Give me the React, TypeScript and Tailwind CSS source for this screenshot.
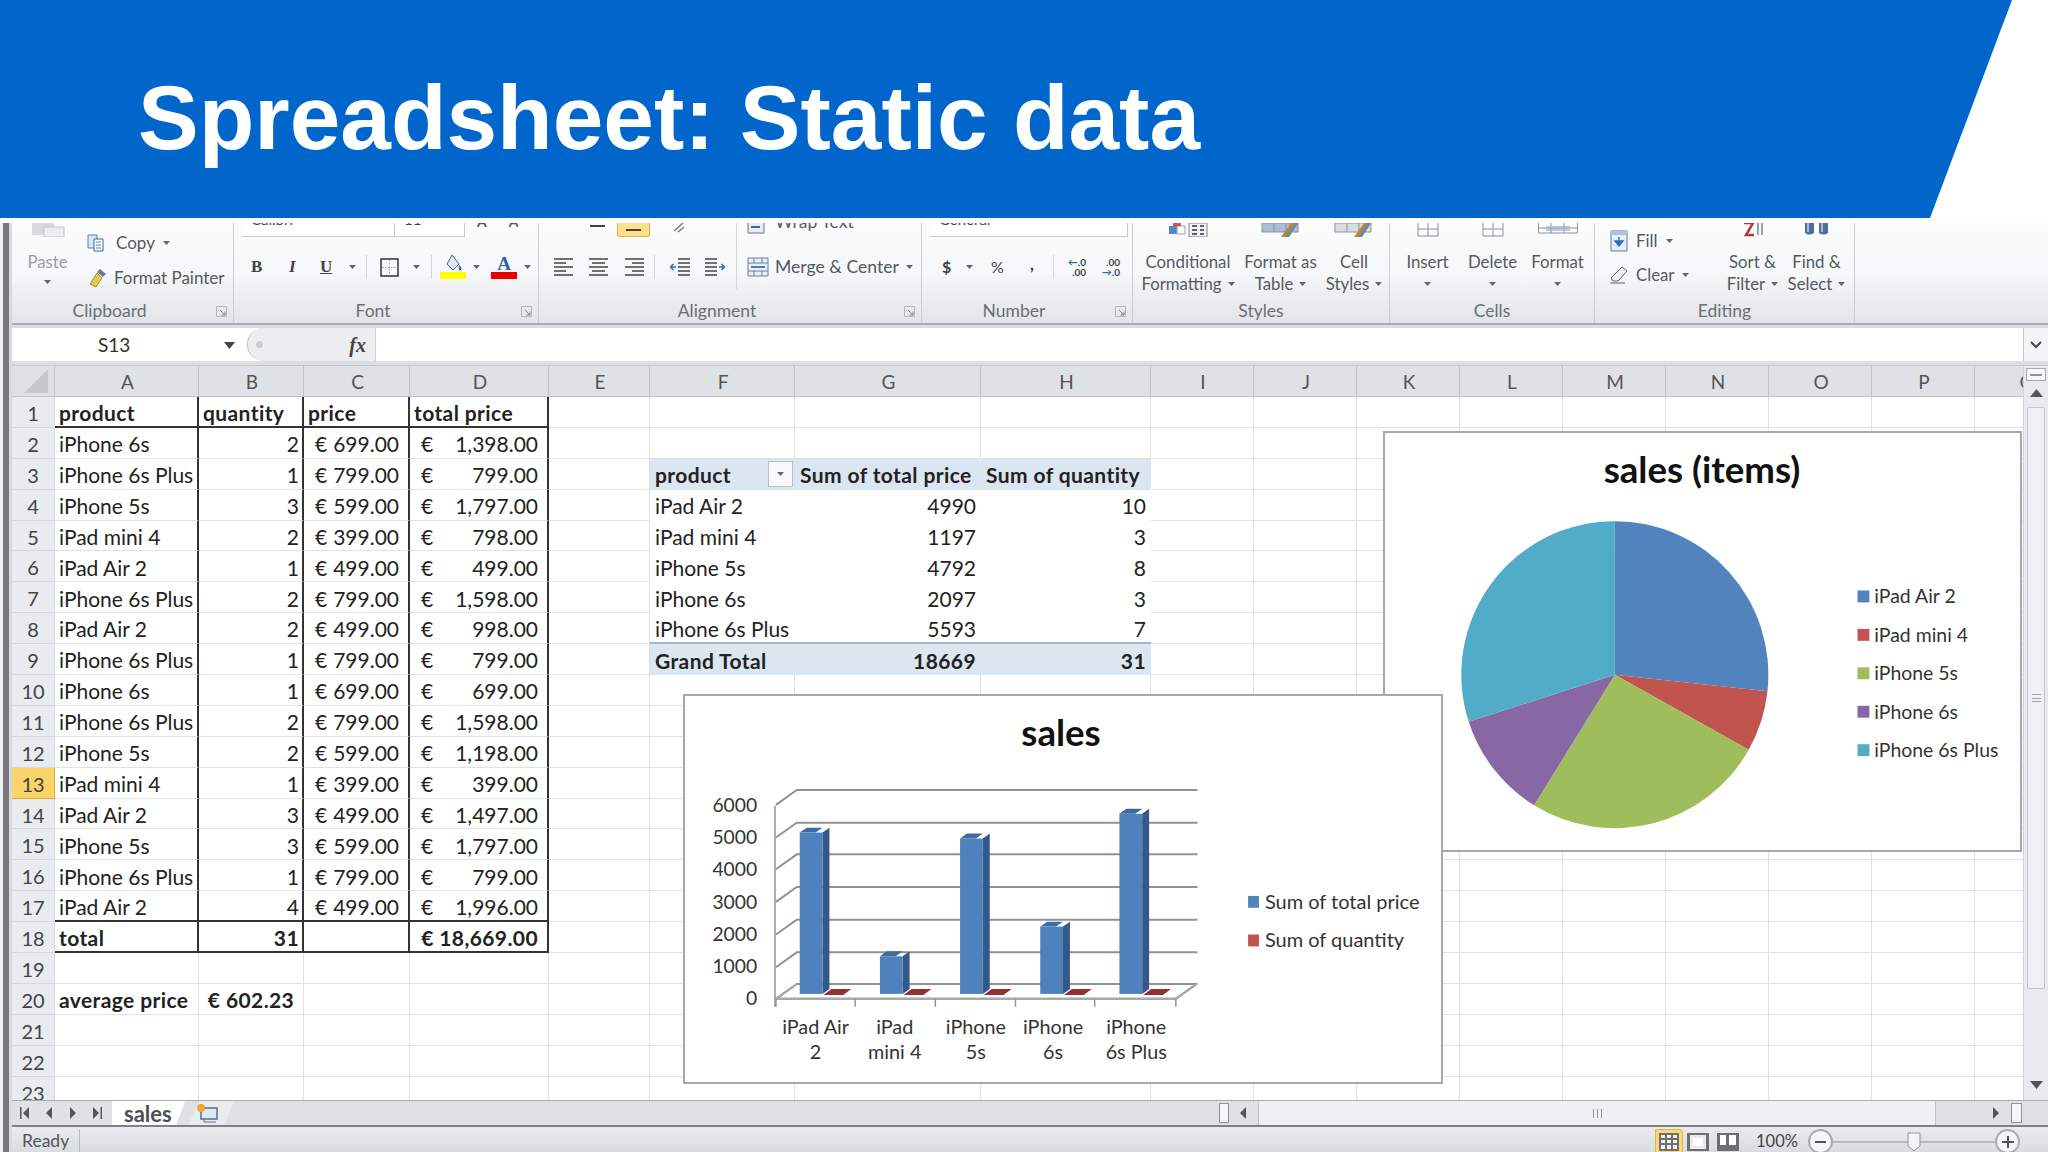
import type { ReactNode } from "react";

const COLS = ["A", "B", "C", "D", "E", "F", "G", "H", "I", "J", "K", "L", "M", "N", "O", "P", "Q"];

const SALES: [string, number, string, string][] = [
  ["iPhone 6s", 2, "699.00", "1,398.00"],
  ["iPhone 6s Plus", 1, "799.00", "799.00"],
  ["iPhone 5s", 3, "599.00", "1,797.00"],
  ["iPad mini 4", 2, "399.00", "798.00"],
  ["iPad Air 2", 1, "499.00", "499.00"],
  ["iPhone 6s Plus", 2, "799.00", "1,598.00"],
  ["iPad Air 2", 2, "499.00", "998.00"],
  ["iPhone 6s Plus", 1, "799.00", "799.00"],
  ["iPhone 6s", 1, "699.00", "699.00"],
  ["iPhone 6s Plus", 2, "799.00", "1,598.00"],
  ["iPhone 5s", 2, "599.00", "1,198.00"],
  ["iPad mini 4", 1, "399.00", "399.00"],
  ["iPad Air 2", 3, "499.00", "1,497.00"],
  ["iPhone 5s", 3, "599.00", "1,797.00"],
  ["iPhone 6s Plus", 1, "799.00", "799.00"],
  ["iPad Air 2", 4, "499.00", "1,996.00"],
];

const PIVOT: [string, number, number][] = [
  ["iPad Air 2", 4990, 10],
  ["iPad mini 4", 1197, 3],
  ["iPhone 5s", 4792, 8],
  ["iPhone 6s", 2097, 3],
  ["iPhone 6s Plus", 5593, 7],
];

const PIE_COLORS = ["#5183bd", "#c25450", "#a0bd5c", "#8767a4", "#50acc8"];

function Caret({ className = "" }: { className?: string }) {
  return (
    <svg width="7" height="4" viewBox="0 0 7 4" className={`shrink-0 ${className}`}>
      <path d="M0 0h7L3.5 4z" fill="#666" />
    </svg>
  );
}

function Launcher() {
  return (
    <svg width="11" height="11" viewBox="0 0 11 11" className="absolute right-[6px] top-[7px]">
      <path d="M.5.5h10v10H.5z" fill="none" stroke="#b5b8bc" />
      <path d="M4 4l5 5M9 5.5V9H5.5" fill="none" stroke="#7d8186" />
    </svg>
  );
}

function Group({ width, label, launcher, children }: { width: string; label: string; launcher?: boolean; children: ReactNode }) {
  return (
    <div className={`${width} shrink-0 h-full flex flex-col border-r border-[#c9ccd0]`}>
      <div className="flex-1 min-h-0 overflow-hidden">{children}</div>
      <div className={`relative h-[24px] shrink-0 flex items-center justify-center text-[17.5px] text-[#6b6f75] ${launcher ? "pr-[26px]" : ""}`}>
        {label}
        {launcher && <Launcher />}
      </div>
    </div>
  );
}

function Sep({ className = "h-[24px]" }: { className?: string }) {
  return <div className={`w-px shrink-0 bg-[#d3d6da] ${className}`} />;
}

function TextBox({ width, text }: { width: string; text: string }) {
  return (
    <div className={`${width} h-[14px] shrink-0 bg-white border-r border-b border-[#c6cacf] overflow-hidden text-[15px] leading-[15px] text-[#444] pl-[9px]`}>
      <div className="-mt-[11px]">{text}</div>
    </div>
  );
}

function LinesIcon({ kind }: { kind: "left" | "center" | "right" }) {
  const rows =
    kind === "left"
      ? ["M0 1h19", "M0 5h12", "M0 9h19", "M0 13h12", "M0 17h19"]
      : kind === "center"
        ? ["M0 1h19", "M3 5h13", "M0 9h19", "M3 13h13", "M0 17h19"]
        : ["M0 1h19", "M7 5h12", "M0 9h19", "M7 13h12", "M0 17h19"];
  return (
    <svg width="19" height="18" viewBox="0 0 19 18" className="shrink-0">
      <path d={rows.join("")} stroke="#444" strokeWidth="1.6" />
    </svg>
  );
}

function IndentIcon({ flip }: { flip?: boolean }) {
  return (
    <svg width="20" height="20" viewBox="0 0 20 20" className={`shrink-0 ${flip ? "-scale-x-100" : ""}`}>
      <path d="M8 2h12M8 6h12M8 10h12M8 14h12M8 18h12" stroke="#444" strokeWidth="1.5" />
      <path d="M6 10H1m2.500-3L.5 10l3 3" stroke="#2f6fc0" strokeWidth="1.6" fill="none" />
    </svg>
  );
}

function GridCut({ wide }: { wide?: boolean }) {
  return (
    <svg width={wide ? 40 : 22} height="14" viewBox={`0 0 ${wide ? 40 : 22} 14`}>
      <path d={wide ? "M.5 0v10h39V0M13 0v10M26 0v10M.5 5h39" : "M1 0v13h20V0M11 0v13M1 6h20"} stroke="#8d9298" fill="none" />
      {wide && <path d="M8 3h24v5H8z" fill="#9fb5d4" opacity=".7" />}
    </svg>
  );
}

function StyleIcon({ kind }: { kind: "cond" | "table" | "cell" }) {
  return (
    <svg width="40" height="14" viewBox="0 0 40 14">
      {kind === "cond" ? (
        <>
          <path d="M1 3h8v8H1z" fill="#5a86c0" />
          <path d="M9 3h8v8H9z" fill="#fff" stroke="#8aa0bd" />
          <path d="M5 0h8v3H5z" fill="#d9534f" />
          <path d="M21 0h18v14H21z" fill="#eef1f5" stroke="#7d848c" />
          <path d="M24 3h5M24 7h5M24 11h5M32 3h4M32 7h4M32 11h4" stroke="#333" strokeWidth="1.4" />
        </>
      ) : (
        <>
          <path d="M1 0h36v9H1z" fill={kind === "table" ? "#a8bed9" : "#d9dde2"} stroke="#8d9298" />
          <path d="M13 0v9M25 0v9" stroke="#8d9298" />
          <path d="M20 14l10-14h7L28 14z" fill="#b58a35" />
          <path d="M24 14l10-14h3L28 14z" fill="#6f88aa" />
        </>
      )}
    </svg>
  );
}

function BigButton({ width, icon, line1, line2 }: { width: string; icon: ReactNode; line1: string; line2?: string }) {
  return (
    <div className={`${width} shrink-0 flex flex-col items-center text-[16.8px] leading-[22px] text-[#555a60]`}>
      <div className="h-[14px] flex justify-center overflow-hidden">{icon}</div>
      <div className="mt-[14px] whitespace-nowrap">{line1}</div>
      <div className="h-[22px] flex items-center gap-[6px] whitespace-nowrap">
        {line2}
        <Caret />
      </div>
    </div>
  );
}

function Ribbon() {
  return (
    <div className="h-[100px] shrink-0 flex bg-gradient-to-b from-[#fbfcfc] via-[#f6f7f8] to-[#e2e4e7] overflow-hidden">
      <Group width="w-[222px]" label="Clipboard" launcher>
        <div className="flex">
          <div className="w-[75px] shrink-0 flex flex-col items-center pr-[4px] text-[16.8px] leading-[22px] text-[#9a9da1]">
            <svg width="34" height="14" viewBox="0 0 34 14">
              <path d="M1 0h22v12H1z" fill="#d7d9dc" />
              <path d="M13 4h20v10H13z" fill="#eceef0" stroke="#c3c6ca" />
            </svg>
            <div className="mt-[14px]">Paste</div>
            <Caret className="mt-[7px]" />
          </div>
          <div className="flex flex-col gap-[15px] pt-[10px] text-[17px] leading-[20px] text-[#555a60]">
            <div className="flex items-center h-[20px]">
              <svg width="20" height="18" viewBox="0 0 20 18" className="mr-[9px]">
                <path d="M1 1h9v13H1z" fill="#dce6f2" stroke="#5a7fb0" />
                <path d="M7 5h9v12H7z" fill="#fff" stroke="#3b66a0" />
                <path d="M9 8h5M9 11h5M9 14h5" stroke="#5a7fb0" />
              </svg>
              Copy
              <Caret className="ml-[8px]" />
            </div>
            <div className="flex items-center h-[20px]">
              <svg width="20" height="20" viewBox="0 0 20 20" className="mr-[7px]">
                <path d="M13 1l6 5-3 3-6-5z" fill="#6a7c93" />
                <path d="M10 5l5 5-6 9-6-3z" fill="#e8c65a" stroke="#a98c2c" />
              </svg>
              Format Painter
            </div>
          </div>
        </div>
      </Group>

      <Group width="w-[305px]" label="Font" launcher>
        <div className="flex items-start pl-[8px]">
          <TextBox width="w-[153px]" text="Calibri" />
          <TextBox width="w-[70px]" text="11" />
          <div className="h-[14px] overflow-hidden pl-[12px] text-[14px] font-bold leading-[15px] text-[#555] flex gap-[22px]">
            <div className="-mt-[9px]">A</div>
            <div className="-mt-[9px]">A</div>
          </div>
        </div>
        <div className="flex items-center h-[24px] mt-[18px] pl-[17px] text-[#3d4248]">
          <div className="w-[38px] text-[17px] font-bold font-['Liberation_Serif']">B</div>
          <div className="w-[31px] text-[17px] italic font-bold font-['Liberation_Serif']">I</div>
          <div className="w-[29px] text-[17px] font-bold underline font-['Liberation_Serif']">U</div>
          <Caret className="mr-[10px]" />
          <Sep />
          <svg width="19" height="19" viewBox="0 0 19 19" className="ml-[13px] mr-[14px] shrink-0">
            <path d="M1 1h17v17H1z" fill="none" stroke="#333" strokeWidth="1.5" />
            <path d="M9.500 2v15M2 9.500h15" stroke="#9aa0a6" strokeDasharray="1.500 1.500" />
          </svg>
          <Caret className="mr-[11px]" />
          <Sep />
          <div className="ml-[8px] mr-[7px] w-[26px] flex flex-col items-center shrink-0">
            <svg width="20" height="17" viewBox="0 0 20 17">
              <path d="M9 0l7 9-6 6-6-6z" fill="#dfe7f2" stroke="#3f66a0" />
              <path d="M16 10c2 2 3 3 2 5s-3 0-2-5z" fill="#3f66a0" />
            </svg>
            <div className="w-[26px] h-[7px] bg-[#ffff00]" />
          </div>
          <Caret className="mr-[11px]" />
          <div className="w-[26px] mr-[7px] flex flex-col items-center shrink-0">
            <div className="text-[19px] leading-[17px] font-bold text-[#2f5fa5] font-['Liberation_Serif']">A</div>
            <div className="w-[26px] h-[7px] bg-[#e60000]" />
          </div>
          <Caret />
        </div>
      </Group>

      <Group width="w-[383px]" label="Alignment" launcher>
        <div className="flex h-full">
          <div className="w-[197px] shrink-0">
            <div className="flex items-start h-[14px]">
              <div className="ml-[51px] mt-[2px] w-[15px] h-[2px] bg-[#444]" />
              <div className="ml-[12px] w-[33px] h-[14px] rounded-b-[3px] bg-[#fbe08e] border border-t-0 border-[#d9b04f] flex justify-center">
                <div className="mt-[6px] w-[15px] h-[2px] bg-[#444]" />
              </div>
              <svg width="14" height="10" viewBox="0 0 14 10" className="ml-[22px]">
                <path d="M2 8l9-8M6 9l6-5" stroke="#777" strokeWidth="1.4" />
              </svg>
            </div>
            <div className="flex items-center h-[24px] mt-[18px] pl-[15px]">
              <LinesIcon kind="left" />
              <div className="ml-[16px]"><LinesIcon kind="center" /></div>
              <div className="ml-[17px]"><LinesIcon kind="right" /></div>
              <Sep className="ml-[10px] h-[24px]" />
              <div className="ml-[15px]"><IndentIcon /></div>
              <div className="ml-[15px]"><IndentIcon flip /></div>
            </div>
          </div>
          <Sep className="h-[66px]" />
          <div className="pl-[10px] text-[17.6px] text-[#555a60]">
            <div className="flex items-start h-[14px] overflow-hidden leading-[16px]">
              <svg width="18" height="14" viewBox="0 0 18 14" className="shrink-0">
                <path d="M1 0v10h16V0" fill="#e8ebef" stroke="#6d7680" />
                <path d="M4 4h9" stroke="#3f66a0" strokeWidth="2" />
              </svg>
              <div className="ml-[10px] -mt-[9px]">Wrap Text</div>
            </div>
            <div className="flex items-center h-[24px] mt-[18px] leading-[20px]">
              <svg width="22" height="20" viewBox="0 0 22 20" className="shrink-0 mr-[6px]">
                <path d="M1 1h20v18H1z" fill="#e8eef6" stroke="#6d7f96" />
                <path d="M1 6h20M1 14h20M7 1v5M15 1v5M7 14v5M15 14v5" stroke="#6d7f96" />
                <path d="M4 10h14" stroke="#2f5fa5" strokeWidth="1.6" />
              </svg>
              Merge &amp; Center
              <Caret className="ml-[7px]" />
            </div>
          </div>
        </div>
      </Group>

      <Group width="w-[211px]" label="Number" launcher>
        <div className="pl-[8px]">
          <TextBox width="w-[198px]" text="General" />
        </div>
        <div className="flex items-center h-[24px] mt-[18px] pl-[20px] text-[#3d4248]">
          <div className="w-[24px] font-bold text-[16px]">$</div>
          <Caret className="mr-[18px]" />
          <div className="w-[39px] text-[16px]">%</div>
          <div className="w-[23px] font-bold text-[17px] -mt-[6px]">,</div>
          <Sep />
          <div className="ml-[12px] flex flex-col items-end text-[10px] leading-[10px] font-bold w-[20px] text-[#444]">
            <span className="whitespace-nowrap"><span className="text-[#2f6fc0]">←</span>.0</span>
            <span>.00</span>
          </div>
          <div className="ml-[16px] flex flex-col items-end text-[10px] leading-[10px] font-bold w-[18px] text-[#444]">
            <span>.00</span>
            <span className="whitespace-nowrap"><span className="text-[#2f6fc0]">→</span>.0</span>
          </div>
        </div>
      </Group>

      <Group width="w-[257px]" label="Styles">
        <div className="flex">
          <BigButton width="w-[110px]" icon={<StyleIcon kind="cond" />} line1="Conditional" line2="Formatting" />
          <BigButton width="w-[75px]" icon={<StyleIcon kind="table" />} line1="Format as" line2="Table" />
          <BigButton width="w-[72px]" icon={<StyleIcon kind="cell" />} line1="Cell" line2="Styles" />
        </div>
      </Group>

      <Group width="w-[205px]" label="Cells">
        <div className="flex pl-[5px]">
          <BigButton width="w-[65px]" icon={<GridCut />} line1="Insert" />
          <BigButton width="w-[65px]" icon={<GridCut />} line1="Delete" />
          <BigButton width="w-[65px]" icon={<GridCut wide />} line1="Format" />
        </div>
      </Group>

      <Group width="w-[260px]" label="Editing">
        <div className="flex">
          <div className="w-[125px] shrink-0 pl-[15px] pt-[7px] flex flex-col gap-[13px] text-[16.8px] leading-[20px] text-[#555a60]">
            <div className="flex items-center h-[22px]">
              <svg width="18" height="22" viewBox="0 0 18 22" className="mr-[8px]">
                <path d="M1 1h16v20H1z" fill="#e6edf7" stroke="#4f7ab5" />
                <path d="M1 1h16v4H1z" fill="#a9c1e2" />
                <path d="M9 7v8M5 11l4 5 4-5z" fill="#2f6fc0" stroke="#2f6fc0" strokeWidth="1.4" />
              </svg>
              Fill
              <Caret className="ml-[9px]" />
            </div>
            <div className="flex items-center h-[20px]">
              <svg width="18" height="18" viewBox="0 0 18 18" className="mr-[8px]">
                <path d="M12 1l5 4-9 10H3L1 12z" fill="#eef0f3" stroke="#5e656d" />
                <path d="M0 17h15" stroke="#5e656d" />
              </svg>
              Clear
              <Caret className="ml-[8px]" />
            </div>
          </div>
          <BigButton
            width="w-[65px]"
            icon={
              <svg width="24" height="14" viewBox="0 0 24 14">
                <path d="M3 0h9L5 12h8" fill="none" stroke="#b23a3a" strokeWidth="2.500" />
                <path d="M17 0v12M21 0v12" stroke="#9aa0a8" strokeWidth="2" />
              </svg>
            }
            line1="Sort &"
            line2="Filter"
          />
          <BigButton
            width="w-[63px]"
            icon={
              <svg width="26" height="14" viewBox="0 0 26 14">
                <path d="M1 0h9v10q-4.500 3-9 0zM15 0h9v10q-4.500 3-9 0z" fill="#4e6f9f" />
                <path d="M3 0h2v9H3zM17 0h2v9h-2z" fill="#a7bbd6" />
              </svg>
            }
            line1="Find &"
            line2="Select"
          />
        </div>
      </Group>
    </div>
  );
}

function FormulaBar() {
  return (
    <div className="h-[43px] shrink-0 flex flex-col bg-[#dcdee1] border-t-2 border-[#a9acb1]">
      <div className="h-[3px] shrink-0" />
      <div className="h-[33px] shrink-0 flex bg-white">
        <div className="w-[235px] shrink-0 flex items-center pt-[2px] text-[19px] text-[#333]">
          <span className="ml-[86px]">S13</span>
          <svg width="11" height="7" viewBox="0 0 11 7" className="ml-[94px]">
            <path d="M0 0h11L5.500 7z" fill="#444" />
          </svg>
        </div>
        <div className="w-[128px] shrink-0 flex items-center justify-between rounded-l-[16px] border-l border-[#bfc2c6] bg-[#eceef0] pl-[8px] pr-[9px]">
          <div className="w-[7px] h-[7px] rounded-full bg-[#c9ccd0]" />
          <span className="font-['Liberation_Serif'] italic font-bold text-[20px] text-[#444]">fx</span>
        </div>
        <div className="flex-1 border-l border-[#ced1d5]" />
        <div className="w-[25px] shrink-0 flex items-center justify-center border-l border-[#c6c9cd] bg-[#f4f5f6]">
          <svg width="12" height="8" viewBox="0 0 12 8">
            <path d="M1 1l5 5 5-5" fill="none" stroke="#444" strokeWidth="2" />
          </svg>
        </div>
      </div>
      <div className="flex-1 border-b border-[#c3c6ca]" />
    </div>
  );
}

function Money({ value }: { value: string }) {
  return (
    <div className="h-full flex items-center justify-between pl-[11px] pr-[9px] pt-[2px]">
      <span>€</span>
      <span>{value}</span>
    </div>
  );
}

function cellContent(row: number, col: number): ReactNode {
  const left = "h-full flex items-center pt-[2px] pl-[4px] whitespace-nowrap";
  const right = "h-full flex items-center pt-[2px] justify-end pr-[5px]";
  const rightSales = "h-full flex items-center pt-[2px] justify-end pr-[3px]";
  const bold = "font-bold tracking-[0.4px]";
  if (row === 1 && col < 4) {
    return <div className={`${left} ${bold}`}>{["product", "quantity", "price", "total price"][col]}</div>;
  }
  if (row >= 2 && row <= 17 && col < 4) {
    const s = SALES[row - 2];
    if (col === 0) return <div className={left}>{s[0]}</div>;
    if (col === 1) return <div className={rightSales}>{s[1]}</div>;
    return <Money value={col === 2 ? s[2] : s[3]} />;
  }
  if (row === 18) {
    if (col === 0) return <div className={`${left} ${bold}`}>total</div>;
    if (col === 1) return <div className={`${rightSales} ${bold}`}>31</div>;
    if (col === 3) return <div className={`h-full flex items-center justify-end pt-[2px] pr-[9px] ${bold}`}>€ 18,669.00</div>;
  }
  if (row === 20) {
    if (col === 0) return <div className={`${left} ${bold}`}>average price</div>;
    if (col === 1) return <div className={`h-full flex items-center justify-center pt-[2px] ${bold}`}>€ 602.23</div>;
  }
  if (row === 3) {
    if (col === 5)
      return (
        <div className={`h-full flex items-center justify-between pl-[5px] pr-[2px] ${bold}`}>
          <span className="pt-[2px]">product</span>
          <div className="w-[25px] h-[26px] bg-[#f7f9fc] border border-[#b9bec6] flex items-center justify-center">
            <Caret />
          </div>
        </div>
      );
    if (col === 6) return <div className={`${left} pl-[5px] ${bold}`}>Sum of total price</div>;
    if (col === 7) return <div className={`${left} pl-[5px] ${bold}`}>Sum of quantity</div>;
  }
  if (row >= 4 && row <= 8) {
    const p = PIVOT[row - 4];
    if (col === 5) return <div className={`${left} pl-[5px]`}>{p[0]}</div>;
    if (col === 6) return <div className={right}>{p[1]}</div>;
    if (col === 7) return <div className={right}>{p[2]}</div>;
  }
  if (row === 9) {
    if (col === 5) return <div className={`${left} pl-[5px] ${bold}`}>Grand Total</div>;
    if (col === 6) return <div className={`${right} ${bold}`}>18669</div>;
    if (col === 7) return <div className={`${right} ${bold}`}>31</div>;
  }
  return null;
}

function cellClass(row: number, col: number) {
  const darkRight = row <= 18 && col < 4;
  const darkBottom = col < 4 && (row === 1 || row === 17 || row === 18);
  const pivot = col >= 5 && col <= 7;
  const pivotBand = pivot && (row === 3 || row === 9);
  const pivotBottom = pivot && row === 8;
  const pivotBody = pivot && row > 3 && row < 8;
  return [
    "min-w-0 overflow-hidden",
    darkRight ? "border-r-2 border-r-[#333]" : pivotBand || pivotBody || pivotBottom ? "" : "border-r border-r-[#e1e0e2]",
    darkBottom ? "border-b-2 border-b-[#333]" : pivotBottom ? "border-b-2 border-b-[#9db7d9]" : pivotBand || pivotBody ? "" : "border-b border-b-[#e1e0e2]",
    pivotBand ? "bg-[#dce6f1]" : "",
  ].join(" ");
}

function PieChart() {
  const cx = 1614;
  const cy = 675;
  const r = 155;
  let start = 0;
  const slices = PIVOT.map((p, i) => {
    const end = start + (p[1] / 18669) * Math.PI * 2;
    const d = `M${cx} ${cy}L${cx + r * Math.sin(start)} ${cy - r * Math.cos(start)}A${r} ${r} 0 ${end - start > Math.PI ? 1 : 0} 1 ${cx + r * Math.sin(end)} ${cy - r * Math.cos(end)}Z`;
    start = end;
    return <path key={i} d={d} fill={PIE_COLORS[i]} />;
  });
  return (
    <svg viewBox="1383 431 639 421" className="absolute left-[1371px] top-[65px] w-[639px] h-[421px] bg-white border-2 border-[#a8a8a8]">
      <text x="1702" y="481" textAnchor="middle" fontSize="37" fontWeight="700" fill="#111" fontFamily="Lato">sales (items)</text>
      {slices}
      {PIVOT.map((p, i) => (
        <g key={p[0]}>
          <rect x="1859" y={590 + i * 38.8} width="12" height="12" fill={PIE_COLORS[i]} />
          <text x="1876" y={603 + i * 38.8} fontSize="19.6" fill="#333" fontFamily="Lato">{p[0]}</text>
        </g>
      ))}
    </svg>
  );
}

function BarChart() {
  const grid = [789, 822, 854, 887, 920, 953, 985];
  const bars = [
    { x: 798, top: 832 },
    { x: 879, top: 957 },
    { x: 960, top: 838 },
    { x: 1041, top: 927 },
    { x: 1121, top: 813 },
  ];
  const labels = [
    { x: 814, a: "iPad Air", b: "2" },
    { x: 894, a: "iPad", b: "mini 4" },
    { x: 976, a: "iPhone", b: "5s" },
    { x: 1054, a: "iPhone", b: "6s" },
    { x: 1138, a: "iPhone", b: "6s Plus" },
  ];
  return (
    <svg viewBox="684 694 760 390" className="absolute left-[671px] top-[328px] w-[760px] h-[390px] bg-white border-2 border-[#a8a8a8]">
      <text x="1062" y="745" textAnchor="middle" fontSize="37" fontWeight="700" fill="#111" fontFamily="Lato">sales</text>
      {grid.map((y) => (
        <path key={y} d={`M774 ${y + 15}L795 ${y}H1200`} fill="none" stroke="#8f9296" strokeWidth="2" />
      ))}
      <path d="M773 805V1008" stroke="#8f9296" strokeWidth="1.500" />
      <path d="M774 1000H1178L1199 985" fill="none" stroke="#a5a8ac" strokeWidth="2.500" />
      <path d="M795 985L774 1000" stroke="#a5a8ac" strokeWidth="2" />
      {[774, 854, 935, 1016, 1096, 1178].map((x) => (
        <path key={x} d={`M${x} 1000v8`} stroke="#8f9296" strokeWidth="1.500" />
      ))}
      {["6000", "5000", "4000", "3000", "2000", "1000", "0"].map((t, i) => (
        <text key={t} x="755" y={811 + i * 32.6} textAnchor="end" fontSize="19.500" fill="#333" fontFamily="Lato">{t}</text>
      ))}
      {bars.map((b) => (
        <g key={b.x}>
          <path d={`M${b.x} ${b.top}l7 -5h16l-7 5z`} fill="#3f6ba2" />
          <path d={`M${b.x + 23} ${b.top}l7 -5V990l-7 5z`} fill="#34588a" />
          <rect x={b.x} y={b.top} width="23" height={995 - b.top} fill="#4f81bd" />
          <path d={`M${b.x + 24} 996l8 -6h20l-8 6z`} fill="#94302e" />
        </g>
      ))}
      {labels.map((l) => (
        <g key={l.x} textAnchor="middle" fontSize="20" fill="#333" fontFamily="Lato">
          <text x={l.x} y="1036">{l.a}</text>
          <text x={l.x} y="1061">{l.b}</text>
        </g>
      ))}
      <rect x="1251" y="896" width="11" height="12" fill="#5183bd" />
      <text x="1268" y="909" fontSize="20.2" fill="#333" fontFamily="Lato">Sum of total price</text>
      <rect x="1251" y="935" width="11" height="12" fill="#c25450" />
      <text x="1268" y="948" fontSize="20.2" fill="#333" fontFamily="Lato">Sum of quantity</text>
    </svg>
  );
}

function Sheet() {
  const rows = Array.from({ length: 23 }, (_, i) => i + 1);
  return (
    <div className="relative w-[2011px] shrink-0 h-full overflow-hidden">
      <div className="grid w-[2066px] grid-cols-[43px_144px_105px_106px_139px_101px_145px_186px_170px_103px_103px_103px_103px_103px_103px_103px_103px_103px] grid-rows-[31px_repeat(23,30.9px)] text-[21px] text-[#222]">
        <div className="bg-[#dfe2e5] border-r border-b border-[#c3c6ca] flex items-end justify-end pr-[6px] pb-[3px]">
          <svg width="24" height="24" viewBox="0 0 24 24">
            <path d="M24 0v24H0z" fill="#c4c7cb" />
          </svg>
        </div>
        {COLS.map((c) => (
          <div key={c} className="bg-[#dfe2e5] border-r border-b border-[#bfc2c7] flex items-center justify-center pt-[3px] pl-[2px] text-[19px] text-[#555]">
            {c}
          </div>
        ))}
        {rows.map((row) => [
          <div
            key={`h${row}`}
            className={`flex items-center justify-center pt-[2px] border-r border-b text-[20px] text-[#444] ${row === 13 ? "bg-[#fad468] border-[#d9a93f]" : "bg-[#e9ebee] border-[#d5d8dc]"}`}
          >
            {row}
          </div>,
          ...COLS.map((_, col) => (
            <div key={`${row}-${col}`} className={cellClass(row, col)}>
              {cellContent(row, col)}
            </div>
          )),
        ])}
      </div>
      <PieChart />
      <BarChart />
    </div>
  );
}

function VScroll() {
  return (
    <div className="w-[25px] shrink-0 h-full flex flex-col items-center bg-[#e8eaed] border-l border-[#d0d3d7]">
      <div className="w-[20px] h-[13px] mt-[2px] bg-[#f6f7f8] border border-[#a7abb0] flex items-center justify-center">
        <div className="w-[12px] h-[2px] bg-[#8f9398]" />
      </div>
      <svg width="13" height="8" viewBox="0 0 13 8" className="mt-[8px]">
        <path d="M0 8h13L6.500 0z" fill="#555" />
      </svg>
      <div className="w-[18px] h-[582px] mt-[10px] bg-[#f0f1f3] border border-[#c3c6ca] rounded-[2px] flex items-center justify-center">
        <div className="w-[9px] h-[8px] border-y border-[#a3a6aa] flex items-center">
          <div className="w-full h-px bg-[#a3a6aa]" />
        </div>
      </div>
      <svg width="13" height="8" viewBox="0 0 13 8" className="mt-[92px]">
        <path d="M0 0h13L6.500 8z" fill="#555" />
      </svg>
    </div>
  );
}

function Tri({ dir, bar }: { dir: "l" | "r"; bar?: boolean }) {
  return (
    <svg width="10" height="14" viewBox="0 0 10 14" className="shrink-0">
      <path d={dir === "l" ? (bar ? "M9 1v12L3 7zM0 1h1.500v12H0z" : "M8 1v12L2 7z") : bar ? "M1 1v12l6-6zM8.500 1H10v12H8.500z" : "M2 1v12l6-6z"} fill="#555" />
    </svg>
  );
}

function TabBar() {
  return (
    <div className="h-[25px] shrink-0 flex items-stretch bg-[#dfe2e5] border-t border-[#a8abb0]">
      <div className="w-[101px] shrink-0 flex items-center pl-[8px] gap-[14px] border-r border-[#c5c8cc]">
        <Tri dir="l" bar />
        <Tri dir="l" />
        <Tri dir="r" />
        <Tri dir="r" bar />
      </div>
      <div className="w-[73px] shrink-0 -ml-px bg-white [clip-path:polygon(0_0,100%_0,88%_100%,0_100%)] flex items-center pl-[12px] text-[22px] font-bold text-[#4a5058]">
        sales
      </div>
      <div className="w-[56px] shrink-0 -ml-[7px] bg-[#e9ebee] [clip-path:polygon(18%_100%,38%_0,100%_0,82%_100%)] flex items-center pl-[18px]">
        <svg width="24" height="20" viewBox="0 0 24 20">
          <path d="M5 5h16v11H5z" fill="#dfe7f2" stroke="#54708f" strokeWidth="1.500" />
          <path d="M8 16v3h12" fill="none" stroke="#54708f" />
          <circle cx="5" cy="5" r="4" fill="#f4a72a" />
        </svg>
      </div>
      <div className="w-[985px] shrink-0" />
      <div className="w-[10px] shrink-0 my-[2px] bg-[#f4f5f6] border border-[#8f9398]" />
      <div className="flex items-center shrink-0 ml-[9px]">
        <Tri dir="l" />
      </div>
      <div className="w-[678px] shrink-0 ml-[10px] bg-[#eef0f2] border-x border-[#bfc2c6] flex items-center justify-center">
        <div className="w-[9px] h-[9px] border-x border-[#8f9398] flex justify-center">
          <div className="w-px h-full bg-[#8f9398]" />
        </div>
      </div>
      <div className="flex items-center shrink-0 ml-[55px]">
        <Tri dir="r" />
      </div>
      <div className="w-[11px] shrink-0 ml-[10px] my-[2px] bg-[#f4f5f6] border border-[#8f9398]" />
    </div>
  );
}

function StatusBar() {
  return (
    <div className="h-[25px] shrink-0 flex items-center pt-[4px] bg-gradient-to-b from-[#e9ebee] to-[#d9dce0] text-[17.5px] text-[#555] overflow-hidden">
      <div className="w-[68px] h-[25px] shrink-0 border-r border-[#b7babf] flex items-center pl-[10px]">Ready</div>
      <div className="w-[1576px] shrink-0 h-[25px] border-r border-[#b7babf]" />
      <div className="w-[28px] h-[25px] ml-[-1px] shrink-0 bg-[#fbd878] border border-[#e3b34c] rounded-t-[3px] flex items-center justify-center">
        <svg width="20" height="18" viewBox="0 0 20 18">
          <path d="M0 0h20v18H0z" fill="#6d6f73" />
          <path d="M2 2h4v3H2zM8 2h4v3H8zM14 2h4v3h-4zM2 7h4v3H2zM8 7h4v3H8zM14 7h4v3h-4zM2 12h4v4H2zM8 12h4v4H8zM14 12h4v4h-4z" fill="#f5f5f5" />
        </svg>
      </div>
      <svg width="22" height="18" viewBox="0 0 22 18" className="ml-[4px] shrink-0">
        <path d="M0 0h22v18H0z" fill="#6d6f73" />
        <path d="M3 2h16v14H3z" fill="#e9ebee" />
        <path d="M6 5h10v8H6z" fill="#fff" />
      </svg>
      <svg width="22" height="18" viewBox="0 0 22 18" className="ml-[8px] shrink-0">
        <path d="M0 0h22v18H0z" fill="#6d6f73" />
        <path d="M3 2h6v10H3zM12 2h7v10h-7z" fill="#fff" />
      </svg>
      <div className="ml-[17px] w-[41px] shrink-0 text-[16.5px] text-[#444] whitespace-nowrap">100%</div>
      <div className="ml-[11px] w-[25px] h-[25px] shrink-0 rounded-full bg-[#f4f5f6] border-2 border-[#a9acb1] flex items-center justify-center">
        <div className="w-[11px] h-[2px] bg-[#555]" />
      </div>
      <div className="flex-none w-[162px] h-[2px] bg-[#b7babf] relative">
        <svg width="14" height="20" viewBox="0 0 14 20" className="absolute left-[74px] -top-[9px]">
          <path d="M1 1h12v13l-6 5-6-5z" fill="#f4f5f6" stroke="#8f9398" />
        </svg>
      </div>
      <div className="w-[25px] h-[25px] shrink-0 rounded-full bg-[#f4f5f6] border-2 border-[#a9acb1] flex items-center justify-center relative">
        <div className="w-[12px] h-[2px] bg-[#555]" />
        <div className="absolute w-[2px] h-[12px] bg-[#555]" />
      </div>
    </div>
  );
}

export default function App() {
  return (
    <div className="w-[2048px] h-[1152px] overflow-hidden flex flex-col bg-white font-['Lato',sans-serif]">
      <div className="h-[218px] shrink-0 bg-[#0066cc] [clip-path:polygon(0_0,2012px_0,1930px_100%,0_100%)] flex items-center pl-[138px] pt-[18px]">
        <h1 className="text-[91px] font-bold text-white font-['Liberation_Sans',sans-serif] whitespace-nowrap">Spreadsheet: Static data</h1>
      </div>
      <div className="flex-1 min-h-0 flex pt-[5px]">
        <div className="w-[12px] shrink-0 bg-[#77797c] border-l-[3px] border-l-[#f0f0f0] border-r-[3px] border-r-[#d8dadd]" />
        <div className="flex-1 min-w-0 flex flex-col">
          <Ribbon />
          <FormulaBar />
          <div className="h-[734px] shrink-0 flex">
            <Sheet />
            <VScroll />
          </div>
          <TabBar />
          <div className="h-[2px] shrink-0 bg-[#7d8186]" />
          <StatusBar />
        </div>
      </div>
    </div>
  );
}
